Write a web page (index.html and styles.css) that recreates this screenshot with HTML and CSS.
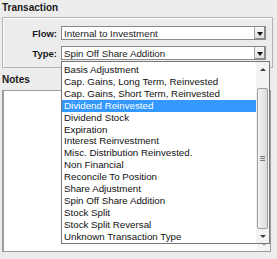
FILE: index.html
```html
<!DOCTYPE html>
<html lang="en">
<head>
  <meta charset="UTF-8" />
  <title>Transaction</title>
  <link rel="stylesheet" href="styles.css">
</head>
<body>
  <div class="page">
    <div class="section-title">Transaction</div>
    <div class="group">
      <div class="row">
        <label>Flow:</label>
        <div class="combo">
          <span class="combo-text">Internal to Investment</span>
          <span class="combo-btn"><span class="tri-down"></span></span>
        </div>
      </div>
      <div class="row">
        <label>Type:</label>
        <div class="combo">
          <span class="combo-text">Spin Off Share Addition</span>
          <span class="combo-btn"><span class="tri-down"></span></span>
        </div>
      </div>
    </div>

    <div class="section-title notes-title">Notes</div>
    <div class="notes">
      <div class="notes-scroll">
        <span class="scroll-btn"><span class="arrow-down off"></span></span>
      </div>
    </div>

    <!-- open drop-down of the Type box -->
    <div class="popup">
      <ul class="options">
        <li>Basis Adjustment</li>
        <li>Cap. Gains, Long Term, Reinvested</li>
        <li>Cap. Gains, Short Term, Reinvested</li>
        <li class="selected">Dividend Reinvested</li>
        <li>Dividend Stock</li>
        <li>Expiration</li>
        <li>Interest Reinvestment</li>
        <li>Misc. Distribution Reinvested.</li>
        <li>Non Financial</li>
        <li>Reconcile To Position</li>
        <li>Share Adjustment</li>
        <li>Spin Off Share Addition</li>
        <li>Stock Split</li>
        <li>Stock Split Reversal</li>
        <li>Unknown Transaction Type</li>
      </ul>
      <div class="scrollbar">
        <span class="scroll-btn up"><span class="arrow-up"></span></span>
        <span class="track-gap"></span>
        <span class="thumb"><span class="grip"></span></span>
        <span class="scroll-btn down"><span class="arrow-down"></span></span>
      </div>
    </div>
  </div>
</body>
</html>
```

FILE: styles.css
```css
body {
  margin: 0;
  background: #ececec;
  font-family: "Liberation Sans", Arial, sans-serif;
  color: #1a1a1a;
}

.page {
  position: relative;
  width: 277px;
  height: 259px;
  overflow: hidden;
}

.section-title {
  height: 17px;
  box-sizing: border-box;
  padding: 2px 0 0 2px;
  font-size: 10px;
  font-weight: bold;
  line-height: 12px;
}

.notes-title {
  height: 22px;
  padding-top: 6px;
}

.group {
  margin: 0 4px 0 2px;
  border: 1px solid #b4b4b4;
  box-shadow: inset 1px 1px 0 #fff;
  padding: 8px 6px 7px 0;
  display: flex;
  flex-direction: column;
  gap: 6px;
}

.row {
  display: flex;
  align-items: center;
  gap: 4px;
}

.row label {
  width: 54px;
  text-align: right;
  font-size: 9.5px;
  font-weight: bold;
}

.combo {
  flex: 1;
  height: 14px;
  box-sizing: border-box;
  border: 1px solid #8a8a8a;
  background: #fff;
  display: flex;
  align-items: center;
  font-size: 9.75px;
}

.combo-text {
  padding-left: 2px;
  white-space: nowrap;
}

.combo-btn {
  margin-left: auto;
  width: 11px;
  height: 12px;
  box-sizing: border-box;
  background: linear-gradient(#f6f6f6, #dedede);
  border-left: 1px solid #a8a8a8;
  box-shadow: inset -1px -1px 0 #8c8c8c;
  display: flex;
  align-items: center;
  justify-content: center;
}

.tri-down {
  width: 0;
  height: 0;
  border-left: 3px solid transparent;
  border-right: 3px solid transparent;
  border-top: 4px solid #111;
  margin-top: 1px;
}

.notes {
  margin-left: 2px;
  width: 269px;
  height: 162px;
  box-sizing: border-box;
  border: 1px solid #9c9c9c;
  border-left-width: 2px;
  background: #fff;
  display: flex;
  justify-content: flex-end;
}

.notes-scroll {
  width: 13px;
  background: #f4f4f4;
  display: flex;
  flex-direction: column;
  justify-content: flex-end;
}

.popup {
  position: absolute;
  left: 61px;
  top: 61px;
  width: 209px;
  height: 183px;
  box-sizing: border-box;
  border: 1px solid #767676;
  background: #fff;
  display: flex;
}

.options {
  flex: 1;
  list-style: none;
  margin: 0;
  padding: 2px 0 0;
  font-size: 9.75px;
  line-height: 11.9px;
  color: #111;
}

.options li {
  padding-left: 2px;
  white-space: nowrap;
}

.options li.selected {
  background: #3399ff;
  color: #fff;
}

.scrollbar {
  width: 13px;
  background: #f3f3f3;
  display: flex;
  flex-direction: column;
}

.scroll-btn {
  height: 14px;
  display: flex;
  align-items: center;
  justify-content: center;
}

.scroll-btn.up {
  height: 15px;
}

.track-gap {
  height: 11px;
}

.thumb {
  flex: 1;
  margin: 0 1px;
  border: 1px solid #9e9e9e;
  border-radius: 2px;
  background: linear-gradient(to right, #f4f4f4, #dadada);
  display: flex;
  align-items: center;
  justify-content: center;
}

.grip {
  width: 5px;
  height: 5px;
  background: repeating-linear-gradient(#777 0 1px, transparent 1px 2px);
}

.arrow-up,
.arrow-down {
  width: 0;
  height: 0;
  border-left: 3px solid transparent;
  border-right: 3px solid transparent;
}

.arrow-up {
  border-bottom: 3px solid #404040;
}

.arrow-down {
  border-top: 3px solid #404040;
}

.arrow-down.off {
  border-top-color: #a8a8a8;
}
```
